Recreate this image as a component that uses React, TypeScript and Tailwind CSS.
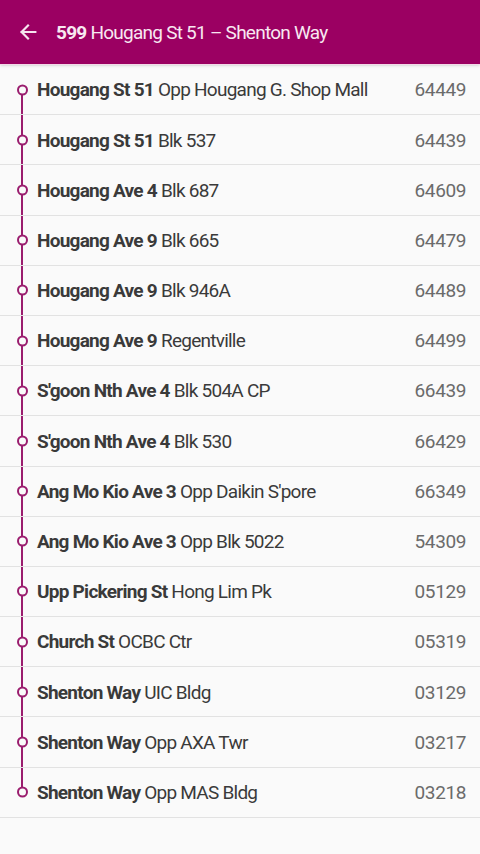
import React from "react";

interface Stop {
  road: string;
  name: string;
  code: string;
}

const stops: Stop[] = [
  { road: "Hougang St 51", name: "Opp Hougang G. Shop Mall", code: "64449" },
  { road: "Hougang St 51", name: "Blk 537", code: "64439" },
  { road: "Hougang Ave 4", name: "Blk 687", code: "64609" },
  { road: "Hougang Ave 9", name: "Blk 665", code: "64479" },
  { road: "Hougang Ave 9", name: "Blk 946A", code: "64489" },
  { road: "Hougang Ave 9", name: "Regentville", code: "64499" },
  { road: "S'goon Nth Ave 4", name: "Blk 504A CP", code: "66439" },
  { road: "S'goon Nth Ave 4", name: "Blk 530", code: "66429" },
  { road: "Ang Mo Kio Ave 3", name: "Opp Daikin S'pore", code: "66349" },
  { road: "Ang Mo Kio Ave 3", name: "Opp Blk 5022", code: "54309" },
  { road: "Upp Pickering St", name: "Hong Lim Pk", code: "05129" },
  { road: "Church St", name: "OCBC Ctr", code: "05319" },
  { road: "Shenton Way", name: "UIC Bldg", code: "03129" },
  { road: "Shenton Way", name: "Opp AXA Twr", code: "03217" },
  { road: "Shenton Way", name: "Opp MAS Bldg", code: "03218" },
];

const StopRow: React.FC<{ stop: Stop; first: boolean; last: boolean }> = ({
  stop,
  first,
  last,
}) => (
  <div className="relative flex h-[50.2px] items-center border-b border-[#e2e2e2]">
    {/* route line */}
    <div
      className={`absolute left-[21px] w-[2px] bg-[#9a1d6e] ${
        first ? "top-1/2 bottom-0" : last ? "top-0 bottom-1/2" : "top-0 bottom-0"
      }`}
    />
    <div className="absolute left-[16.5px] top-1/2 h-[11px] w-[11px] -translate-y-1/2 rounded-full border-2 border-[#9a1d6e] bg-[#fafafa]" />
    <div className="flex-1 truncate pl-[37px] pt-[2px] text-[19px] tracking-[-0.75px] text-[#3a3a3a]">
      <span className="font-bold">{stop.road}</span> {stop.name}
    </div>
    <div className="pr-[14px] pt-[2px] text-[19px] tracking-[-0.4px] text-[#6b6b6b]">{stop.code}</div>
  </div>
);

export default function App() {
  return (
    <div
      className="min-h-[854px] w-[480px] bg-[#fafafa]"
      style={{ fontFamily: "Roboto, 'Liberation Sans', sans-serif" }}
    >
      <div className="flex h-[65px] items-center border-b border-[#f3d9e8] bg-[#9b0062] pl-[17px] text-white shadow-sm">
        <svg width="22" height="22" viewBox="0 0 24 24" fill="none">
          <path
            d="M20 12H5M12 5l-7 7 7 7"
            stroke="#f6e4ef"
            strokeWidth="2.4"
            strokeLinecap="square"
          />
        </svg>
        <div className="pl-[17px] pt-[2px] text-[19px] tracking-[-0.75px] text-[#f8e8f1]">
          <span className="font-bold">599</span> Hougang St 51 – Shenton Way
        </div>
      </div>
      <div>
        {stops.map((stop, i) => (
          <StopRow
            key={stop.code}
            stop={stop}
            first={i === 0}
            last={i === stops.length - 1}
          />
        ))}
      </div>
    </div>
  );
}
